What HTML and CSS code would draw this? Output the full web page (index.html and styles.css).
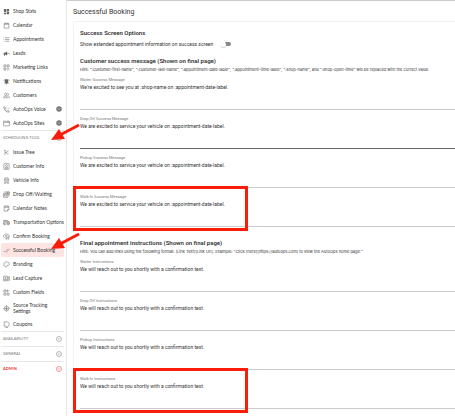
FILE: index.html
```html
<!DOCTYPE html>
<html lang="en">
<head>
<meta charset="utf-8">
<title>Successful Booking</title>
<link rel="stylesheet" href="styles.css">
</head>
<body>
<div class="app">
  <nav class="sidebar">
    <ul class="menu">
      <li><a href="#"><svg class="icon solid" viewBox="0 0 24 24"><path d="M3 3h8v11H3zM13 3h8v7h-8zM3 16h8v5H3zM13 12h8v9h-8z"/></svg>Shop Stats</a></li>
      <li><a href="#"><svg class="icon" viewBox="0 0 24 24"><path d="M4 5h16v16H4zM4 8h16M8 2v4M16 2v4"/></svg>Calendar</a></li>
      <li><a href="#"><svg class="icon" viewBox="0 0 24 24"><path d="M2 6h2M7 6h15M2 12h2M7 12h15M2 18h2M7 18h15"/></svg>Appointments</a></li>
      <li><a href="#"><svg class="icon solid" viewBox="0 0 24 24"><path d="M2 9h5l7-4v14l-7-4v5H4v-5H2zM16 8c3 2 3 6 0 8zM19 11h4v2h-4z"/></svg>Leads</a></li>
      <li><a href="#"><svg class="icon" viewBox="0 0 24 24"><path d="M3 3h7v7H3zM14 3h7v7h-7zM3 14h7v7H3zM14 14h3v3h4M14 21h3M21 20v2M6 6h1M17 6h1M6 17h1"/></svg>Marketing Links</a></li>
      <li><a href="#"><svg class="icon solid" viewBox="0 0 24 24"><path d="M12 3c5 0 6 4 6 8v5l2 3H4l2-3v-5c0-4 1-8 6-8zM10 20h4c0 3-4 3-4 0zM2 10c0-3 1-5 3-7l1 2c-2 1-2 3-2 5zM22 10c0-3-1-5-3-7l-1 2c2 1 2 3 2 5z"/></svg>Notifications</a></li>
      <li><a href="#"><svg class="icon" viewBox="0 0 24 24"><circle cx="9" cy="8" r="4"/><path d="M2 20v-2c0-5 14-5 14 0v2zM15 4c5 0 5 8 0 8M18 14c3 1 4 2 4 6h-3"/></svg>Customers</a></li>
      <li><a href="#"><svg class="icon" viewBox="0 0 24 24"><path d="M3 3h4l2 5-3 3c2 4 4 6 7 7l3-3 5 2v4C11 22 3 13 3 3zM13 8h2M17 8h2M21 8h2"/></svg>AutoOps Voice<svg class="mark filled" viewBox="0 0 24 24"><circle cx="12" cy="12" r="11"/><path d="M7 10l5 5 5-5"/></svg></a></li>
      <li><a href="#"><svg class="icon" viewBox="0 0 24 24"><path d="M2 4h20v16H2zM2 8h20M14 6h6"/></svg>AutoOps Sites<svg class="mark filled" viewBox="0 0 24 24"><circle cx="12" cy="12" r="11"/><path d="M7 10l5 5 5-5"/></svg></a></li>
    </ul>
    <button type="button" class="group open">SCHEDULING TOOL<svg class="mark" viewBox="0 0 24 24"><circle cx="12" cy="12" r="10"/><path d="M7 14l5-4 5 4"/></svg></button>
    <ul class="menu">
      <li><a href="#"><svg class="icon" viewBox="0 0 24 24"><path d="M7 3v18M7 12h5l3-5h4M12 12l3 5h4M4 5h4"/></svg>Issue Tree</a></li>
      <li><a href="#"><svg class="icon" viewBox="0 0 24 24"><rect x="3" y="2" width="18" height="20" rx="2"/><circle cx="12" cy="9" r="3"/><path d="M7 18c0-5 10-5 10 0z"/></svg>Customer Info</a></li>
      <li><a href="#"><svg class="icon" viewBox="0 0 24 24"><path d="M5 8l2-5h10l2 5v6H5zM5 8h14M7 11h2M15 11h2M3 18h18M4 22h6M14 22h6"/></svg>Vehicle Info</a></li>
      <li><a href="#"><svg class="icon" viewBox="0 0 24 24"><path d="M2 7h15v15H2zM5 3h16v14M5 12l2-3h5l2 3v5H5zM5 13h9"/><circle cx="18" cy="7" r="4"/></svg>Drop Off/Waiting</a></li>
      <li><a href="#"><svg class="icon" viewBox="0 0 24 24"><path d="M4 4h16v12l-5 5H4zM4 8h16M8 2v4M16 2v4M15 21v-5h5"/></svg>Calendar Notes</a></li>
      <li><a href="#"><svg class="icon" viewBox="0 0 24 24"><path d="M1 5h14v12H1zM1 11h14M6 5v6M11 5v6M15 8h5l3 5v4h-8M19 8v5h4"/><circle cx="5" cy="18" r="2"/><circle cx="18" cy="18" r="2"/></svg>Transportation Options</a></li>
      <li><a href="#"><svg class="icon" viewBox="0 0 24 24"><path d="M6 18c-8-6-3-15 5-15 7 0 12 5 9 11M7 9h9M7 13h6M10 22l2-6 9-3-3 9-3-3z"/></svg>Confirm Booking</a></li>
      <li><a href="#" class="active"><svg class="icon" viewBox="0 0 24 24"><path d="M1 13l5 5M7 13l5 5L23 6M12 12l5-6"/></svg>Successful Booking</a></li>
      <li><a href="#"><svg class="icon" viewBox="0 0 24 24"><path d="M12 3c6 0 10 4 10 8s-4 5-7 4c-3 0-2 2-2 4s-2 2-4 1C-1 17 1 3 12 3z"/><path d="M7 10h1M12 7h1M17 10h1M6 15h1"/></svg>Branding</a></li>
      <li><a href="#"><svg class="icon" viewBox="0 0 24 24"><path d="M2 4h13v16H2zM18 4v16M22 4v16M5 17c0-4 7-4 7 0z"/><circle cx="8.500" cy="10" r="2"/></svg>Lead Capture</a></li>
      <li><a href="#"><svg class="icon" viewBox="0 0 24 24"><path d="M3 3h7v7H3zM15 2v9M11 6h10M3 14h7v7H3zM14 14h7v7h-7z"/></svg>Custom Fields</a></li>
      <li><a href="#" class="tall"><svg class="icon" viewBox="0 0 24 24"><circle cx="12" cy="12" r="8"/><circle class="dot" cx="12" cy="12" r="3"/><path d="M12 1v4M12 19v4M1 12h4M19 12h4"/></svg>Source Tracking<br>Settings</a></li>
      <li><a href="#"><svg class="icon" viewBox="0 0 24 24"><path d="M4 3h12l5 5v8l-5 4-6-2-6-6zM4 14v5l5 3h8M8 7h1"/></svg>Coupons</a></li>
    </ul>
    <button type="button" class="group">AVAILABILITY<svg class="mark" viewBox="0 0 24 24"><circle cx="12" cy="12" r="10"/><path d="M7 10l5 4 5-4"/></svg></button>
    <button type="button" class="group">GENERAL<svg class="mark" viewBox="0 0 24 24"><circle cx="12" cy="12" r="10"/><path d="M7 10l5 4 5-4"/></svg></button>
    <button type="button" class="group admin">ADMIN<svg class="mark" viewBox="0 0 24 24"><circle cx="12" cy="12" r="10"/><path d="M7 10l5 4 5-4"/></svg></button>
  </nav>

  <main class="content">
    <h1>Successful Booking</h1>
    <form class="card">
      <h2>Success Screen Options</h2>
      <div class="option">
        <label for="extended">Show extended appointment information on success screen</label>
        <input type="checkbox" id="extended" class="switch">
      </div>

      <h2>Customer success message (Shown on final page)</h2>
      <p class="hint">Hint: ":customer-first-name", ":customer-last-name", ":appointment-date-label", ":appointment-time-label", ":shop-name", and ":shop-open-time" will be replaced with the correct value</p>
      <div class="field">
        <label for="msg_waiter">Waiter Success Message</label>
        <textarea id="msg_waiter">We're excited to see you at :shop-name on :appointment-date-label.</textarea>
      </div>
      <div class="field current">
        <label for="msg_dropoff">Drop Off Success Message</label>
        <textarea id="msg_dropoff">We are excited to service your vehicle on :appointment-date-label.</textarea>
      </div>
      <div class="field">
        <label for="msg_pickup">Pickup Success Message</label>
        <textarea id="msg_pickup">We are excited to service your vehicle on :appointment-date-label.</textarea>
      </div>
      <div class="field marked">
        <label for="msg_walkin">Walk-In Success Message</label>
        <textarea id="msg_walkin">We are excited to service your vehicle on :appointment-date-label.</textarea>
      </div>

      <h2>Final appointment instructions (Shown on final page)</h2>
      <p class="hint">Hint: You can add links using the following format: [Link Text](Link Url). Example: "Click [here](https://autoops.com) to view the AutoOps home page."</p>
      <div class="field">
        <label for="ins_waiter">Waiter Instructions</label>
        <textarea id="ins_waiter">We will reach out to you shortly with a confirmation text.</textarea>
      </div>
      <div class="field">
        <label for="ins_dropoff">Drop Off Instructions</label>
        <textarea id="ins_dropoff">We will reach out to you shortly with a confirmation text.</textarea>
      </div>
      <div class="field">
        <label for="ins_pickup">Pickup Instructions</label>
        <textarea id="ins_pickup">We will reach out to you shortly with a confirmation text.</textarea>
      </div>
      <div class="field marked">
        <label for="ins_walkin">Walk-In Instructions</label>
        <textarea id="ins_walkin">We will reach out to you shortly with a confirmation text.</textarea>
      </div>
    </form>
  </main>

  <svg class="arrow first" viewBox="0 0 30 18"><path class="shaft" d="M29 2L10 12"/><path class="head" d="M1 17L9 6l6 10z"/></svg>
  <svg class="arrow second" viewBox="0 0 30 18"><path class="shaft" d="M29 2L10 12"/><path class="head" d="M1 17L9 6l6 10z"/></svg>
</div>
</body>
</html>
```
FILE: styles.css
```css
*,*::before,*::after {box-sizing: border-box;}
body {margin: 0;background: #fff;color: #333;font: 5px/6px Roboto,"Liberation Sans",sans-serif;}
.app {position: relative;display: flex;min-height: 100vh;}

/* left menu */
.sidebar {flex: 0 0 67px;min-width: 0;padding: 4px 2px 0 1px;border-right: 1px solid #e6e6e6;font-family: Lato,sans-serif;}
.menu {list-style: none;margin: 0;padding: 0;}
.menu a {display: flex;align-items: center;gap: 3px;height: 14px;padding: 0 2px;border-radius: 2px;color: #333;text-decoration: none;white-space: nowrap;}
.menu a.active {background: #fde3e1;}
.menu a.tall {height: 18px;}
.icon {flex: none;width: 7px;height: 7px;fill: none;stroke: #777;stroke-width: 2;}
.icon.solid {fill: #666;stroke: none;}
.icon .dot {fill: #777;}
.mark {width: 6px;height: 6px;margin-left: auto;fill: none;stroke: currentColor;stroke-width: 2;}
.mark.filled circle {fill: #777;stroke: none;}
.mark.filled path {stroke: #fff;}
.group {display: flex;align-items: center;width: 100%;height: 15px;padding: 0 2px;border: 0;border-top: 1px solid #e8e8e8;background: none;color: #777;font: inherit;font-size: 4px;}
.group.admin {color: #e53935;font-weight: 700;}

/* page */
.content {flex: 1;min-width: 0;padding: 7px 0 0 6px;border-top: 1px solid #ccc;}
h1 {margin: 0 0 5px;font-size: 7px;line-height: 8px;font-weight: 400;}
.card {padding: 7px 0 0 6px;border: 1px solid #f2f2f2;border-right: 0;border-bottom: 0;border-radius: 2px 0 0 0;}
h2 {margin: 0;font-size: 6px;line-height: 8px;font-weight: 600;}
.option {display: flex;align-items: center;gap: 8px;height: 8px;margin: 3px 0 9px;}
.switch {appearance: none;display: flex;align-items: center;width: 10px;height: 4px;margin: 0;border-radius: 2px;background: linear-gradient(90deg,#fff 4px,#888 4px);}
.switch::before {content: "";width: 5px;height: 5px;border-radius: 50%;background: #fff;box-shadow: 0 1px 1px #ccc;}
.hint {margin: 2px 0 4px;font: 4px/6px Inter,sans-serif;white-space: nowrap;}
.field {position: relative;height: 33px;border-bottom: 1px solid #ccc;}
.field + .field {margin-top: 6px;}
.field label {display: block;padding-top: 1px;color: #777;font-size: 4px;line-height: 4px;}
.field textarea {display: block;width: 100%;height: 26px;padding: 2px 0 0;border: 0;outline: 0;background: none;color: #333;font: inherit;resize: none;overflow: hidden;}
.field.current {border-color: #666;}
.field + h2 {margin-top: 12px;}

/* red markup */
.field.marked::after {content: "";position: absolute;left: -7px;top: -8px;width: 175px;height: 45px;border: 3px solid #fa1e0a;pointer-events: none;}
.arrow {position: absolute;left: 50px;width: 30px;height: 18px;}
.arrow.first {top: 123px;}
.arrow.second {top: 232px;}
.arrow .shaft {fill: none;stroke: #fa1e0a;stroke-width: 3;}
.arrow .head {fill: #fa1e0a;}
```
